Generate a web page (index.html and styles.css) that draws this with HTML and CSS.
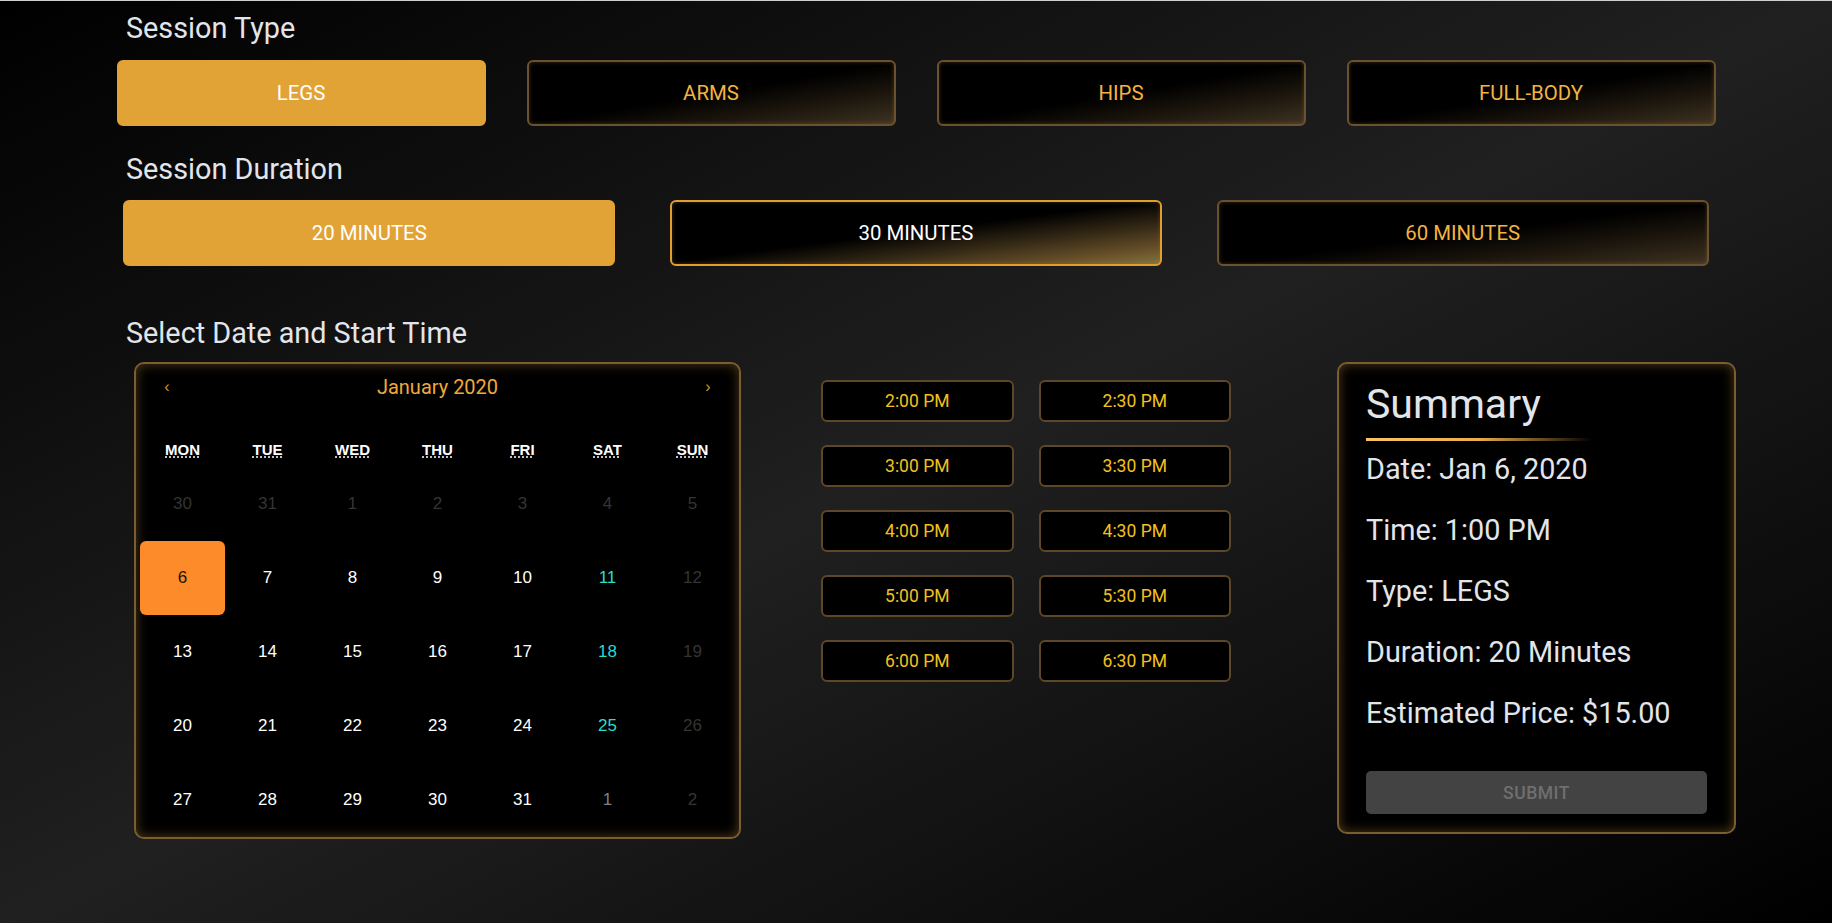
FILE: index.html
```html
<!DOCTYPE html>
<html lang="en">
<head>
<meta charset="utf-8">
<title>Booking</title>
<link rel="stylesheet" href="styles.css">
</head>
<body>
<div class="page">
  <div class="container">
    <h2 class="title title-type">Session Type</h2>
    <div class="choices four">
      <div class="cell"><button class="opt selected">LEGS</button></div>
      <div class="cell"><button class="opt">ARMS</button></div>
      <div class="cell"><button class="opt">HIPS</button></div>
      <div class="cell"><button class="opt">FULL-BODY</button></div>
    </div>

    <h2 class="title title-duration">Session Duration</h2>
    <div class="choices three">
      <div class="cell"><button class="opt selected">20 MINUTES</button></div>
      <div class="cell"><button class="opt focus">30 MINUTES</button></div>
      <div class="cell"><button class="opt">60 MINUTES</button></div>
    </div>

    <h2 class="title title-date">Select Date and Start Time</h2>
    <div class="booking">
      <div class="calendar">
        <div class="cal-nav">
          <span class="nav-btn">‹</span>
          <span class="cal-label">January 2020</span>
          <span class="nav-btn">›</span>
        </div>
        <div class="weekdays">
          <div class="wd"><abbr title="Monday">MON</abbr></div>
          <div class="wd"><abbr title="Tuesday">TUE</abbr></div>
          <div class="wd"><abbr title="Wednesday">WED</abbr></div>
          <div class="wd"><abbr title="Thursday">THU</abbr></div>
          <div class="wd"><abbr title="Friday">FRI</abbr></div>
          <div class="wd"><abbr title="Saturday">SAT</abbr></div>
          <div class="wd"><abbr title="Sunday">SUN</abbr></div>
        </div>
        <div class="days">
          <div class="day off">30</div>
          <div class="day off">31</div>
          <div class="day off">1</div>
          <div class="day off">2</div>
          <div class="day off">3</div>
          <div class="day off">4</div>
          <div class="day off">5</div>

          <div class="day"><span class="active">6</span></div>
          <div class="day">7</div>
          <div class="day">8</div>
          <div class="day">9</div>
          <div class="day">10</div>
          <div class="day sat">11</div>
          <div class="day off">12</div>

          <div class="day">13</div>
          <div class="day">14</div>
          <div class="day">15</div>
          <div class="day">16</div>
          <div class="day">17</div>
          <div class="day sat">18</div>
          <div class="day off">19</div>

          <div class="day">20</div>
          <div class="day">21</div>
          <div class="day">22</div>
          <div class="day">23</div>
          <div class="day">24</div>
          <div class="day sat">25</div>
          <div class="day off">26</div>

          <div class="day">27</div>
          <div class="day">28</div>
          <div class="day">29</div>
          <div class="day">30</div>
          <div class="day">31</div>
          <div class="day next">1</div>
          <div class="day off">2</div>
        </div>
      </div>

      <div class="slots">
        <button class="slot">2:00 PM</button>
        <button class="slot">2:30 PM</button>
        <button class="slot">3:00 PM</button>
        <button class="slot">3:30 PM</button>
        <button class="slot">4:00 PM</button>
        <button class="slot">4:30 PM</button>
        <button class="slot">5:00 PM</button>
        <button class="slot">5:30 PM</button>
        <button class="slot">6:00 PM</button>
        <button class="slot">6:30 PM</button>
      </div>

      <div class="summary">
        <h3 class="sum-title">Summary</h3>
        <div class="sum-rule"></div>
        <p class="sum-line">Date: Jan 6, 2020</p>
        <p class="sum-line">Time: 1:00 PM</p>
        <p class="sum-line">Type: LEGS</p>
        <p class="sum-line">Duration: 20 Minutes</p>
        <p class="sum-line">Estimated Price: $15.00</p>
        <button class="submit" disabled>SUBMIT</button>
      </div>
    </div>
  </div>
</div>
</body>
</html>
```

FILE: styles.css
```css
html, body {
  margin: 0;
  padding: 0;
}

body {
  font-family: Roboto, "Liberation Sans", Arial, sans-serif;
  background: #000;
}

.page {
  min-height: 100vh;
  box-sizing: border-box;
  border-top: 1px solid #cfcfcf;
  padding-top: 11px;
  background: linear-gradient(to bottom right, #000 0%, #202020 50%, #000 100%);
}

.container {
  width: 1640px;
  margin: 0 auto;
}

.title {
  margin: 0 0 15px 30px;
  font-size: 28.8px;
  line-height: 33px;
  font-weight: 400;
  color: #e2e5ea;
}

.title-duration {
  margin-top: 27px;
  margin-bottom: 14px;
}

.title-date {
  margin-top: 51px;
  margin-bottom: 12px;
}

.choices {
  display: grid;
}

.choices.four {
  grid-template-columns: repeat(4, 1fr);
}

.choices.three {
  grid-template-columns: repeat(3, 1fr);
}

.opt {
  display: block;
  width: 90%;
  height: 66px;
  margin: 0 auto;
  box-sizing: border-box;
  border: 2px solid #6a5230;
  border-radius: 6px;
  background: linear-gradient(to bottom right, #000 50%, #1a140c 72%, #3f3322 100%);
  color: #f4b341;
  font-family: Roboto, "Liberation Sans", sans-serif;
  font-size: 20.4px;
  font-weight: 400;
  text-transform: uppercase;
  box-shadow: inset 0 0 4px rgba(170, 125, 55, 0.35);
  cursor: pointer;
}

.opt.selected {
  background: #e2a336;
  border-color: #e2a336;
  color: #ffffff;
  box-shadow: none;
}

.opt.focus {
  border-color: #e29d2e;
  color: #ffffff;
  background: linear-gradient(to bottom right, #000 48%, #2e2413 66%, #6a522a 88%, #7f7540 100%);
}

.booking {
  display: flex;
  align-items: flex-start;
}

/* Calendar */
.calendar {
  width: 607px;
  margin-left: 38px;
  box-sizing: border-box;
  border: 2px solid #7a5e31;
  border-radius: 10px;
  background: #000;
  box-shadow: inset 0 0 12px rgba(180, 130, 50, 0.45);
  padding: 0 4px;
}

.cal-nav {
  display: flex;
  align-items: center;
  height: 45px;
}

.nav-btn {
  width: 54px;
  text-align: center;
  color: #d1952e;
  font-family: "Liberation Sans", Arial, sans-serif;
  font-size: 16px;
}

.cal-label {
  flex: 1;
  text-align: center;
  color: #f0a93a;
  font-size: 20px;
}

.weekdays {
  display: grid;
  grid-template-columns: repeat(7, 85px);
  height: 36px;
  margin-top: 22px;
  align-items: center;
}

.wd {
  text-align: center;
  font-family: "Liberation Sans", Arial, sans-serif;
  font-weight: 700;
  font-size: 15px;
  color: #ffffff;
}

.wd abbr {
  text-decoration: underline dotted;
  text-underline-offset: 2px;
}

.days {
  display: grid;
  grid-template-columns: repeat(7, 85px);
  grid-template-rows: repeat(5, 74px);
}

.day {
  display: flex;
  align-items: center;
  justify-content: center;
  font-family: "Liberation Sans", Arial, sans-serif;
  font-size: 17px;
  color: #ffffff;
}

.day.off {
  color: #343434;
}

.day.sat {
  color: #29dccd;
}

.day.next {
  color: #808080;
}

.day .active {
  display: flex;
  align-items: center;
  justify-content: center;
  width: 85px;
  height: 74px;
  border-radius: 6px;
  background: #fd8b29;
  color: #1a1206;
}

/* Time slots */
.slots {
  display: grid;
  grid-template-columns: repeat(2, 192.5px);
  grid-auto-rows: 42px;
  column-gap: 25px;
  row-gap: 23px;
  margin-left: 80px;
  margin-top: 18px;
}

.slot {
  box-sizing: border-box;
  border: 2px solid #5e4727;
  border-radius: 6px;
  background: #000;
  color: #f3c11f;
  font-family: Roboto, "Liberation Sans", sans-serif;
  font-size: 17.5px;
  padding: 0;
  cursor: pointer;
}

/* Summary */
.summary {
  width: 399px;
  margin-left: 106px;
  box-sizing: border-box;
  border: 2px solid #7a5e31;
  border-radius: 10px;
  background: #000;
  box-shadow: inset 0 0 12px rgba(180, 130, 50, 0.45);
  padding: 16px 27px 18px 27px;
}

.sum-title {
  margin: 0;
  font-size: 41px;
  line-height: 48px;
  font-weight: 400;
  color: #e2e5ea;
}

.sum-rule {
  width: 226px;
  height: 3px;
  margin-top: 10px;
  background: linear-gradient(to right, #f8c465 0%, #e9ae4b 50%, rgba(0, 0, 0, 0) 100%);
}

.sum-line {
  margin: 0 0 28px;
  font-size: 28.8px;
  line-height: 33px;
  color: #e2e5ea;
}

.sum-rule + .sum-line {
  margin-top: 12px;
}

.submit {
  display: block;
  width: 100%;
  height: 43px;
  margin-top: 41px;
  border: none;
  border-radius: 5px;
  background: #434343;
  color: #6f6f6f;
  font-family: Roboto, "Liberation Sans", sans-serif;
  font-size: 17.5px;
  font-weight: 500;
  letter-spacing: 0.5px;
}
```
